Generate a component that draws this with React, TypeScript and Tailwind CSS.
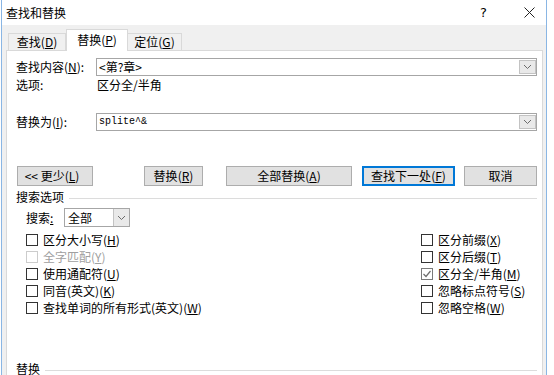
import React from "react";

function K({ c }: { c: string }) {
  return (
    <>
      (<span className="underline underline-offset-[1px]">{c}</span>)
    </>
  );
}

function Chevron() {
  return (
    <svg width="9" height="6" viewBox="0 0 9 6">
      <path d="M1 1 L4.5 4.5 L8 1" fill="none" stroke="#6b6b6b" strokeWidth="1" />
    </svg>
  );
}

function Combo({ children }: { children: React.ReactNode }) {
  return (
    <div className="flex-1 h-[18px] border border-[#a6a6a6] bg-white flex items-center">
      <div className="flex-1 pl-[2px] flex items-center">{children}</div>
      <div className="w-[17px] h-[14px] mr-[0px] border border-[#c3c3c3] bg-[#e9e9e9] flex items-center justify-center">
        <Chevron />
      </div>
    </div>
  );
}

function Btn({ children, w, def }: { children: React.ReactNode; w: string; def?: boolean }) {
  return (
    <div
      className={
        "h-[20px] flex items-center justify-center bg-[#e1e1e1] border " +
        w +
        (def ? " border-[#0078d7] shadow-[inset_0_0_0_1px_#0078d7]" : " border-[#adadad]")
      }
    >
      {children}
    </div>
  );
}

function Box({ checked, disabled }: { checked?: boolean; disabled?: boolean }) {
  return (
    <div
      className={
        "w-[12px] h-[12px] border bg-white flex items-center justify-center shrink-0 " +
        (disabled ? "border-[#cccccc]" : checked ? "border-[#7a7a7a]" : "border-[#333333]")
      }
    >
      {checked && (
        <svg width="10" height="10" viewBox="0 0 10 10">
          <path d="M1.5 5 L4 7.5 L8.5 2" fill="none" stroke="#6e6e6e" strokeWidth="1.2" />
        </svg>
      )}
    </div>
  );
}

function Check({ label, checked, disabled }: { label: React.ReactNode; checked?: boolean; disabled?: boolean }) {
  return (
    <div className="h-[17px] flex items-center gap-[5px]">
      <Box checked={checked} disabled={disabled} />
      <span className={disabled ? "text-[#a0a0a0]" : ""}>{label}</span>
    </div>
  );
}

export default function App() {
  return (
    <div className="w-[554px] h-[375px] bg-white overflow-hidden font-['Noto_Sans_CJK_SC',sans-serif] text-[12px] text-black leading-none">
      <div className="ml-[1px] w-[546px] h-[375px] border-x border-[#8ab6e4] bg-[#f0f0f0] flex flex-col">
        {/* title bar */}
        <div className="h-[25px] shrink-0 bg-white flex items-center pl-[4px]">
          <span>查找和替换</span>
          <span className="ml-auto text-[13px] font-['DejaVu_Sans',sans-serif]">?</span>
          <svg className="ml-[37px] mr-[11px]" width="11" height="11" viewBox="0 0 11 11">
            <path d="M0.5 0.5 L10.5 10.5 M10.5 0.5 L0.5 10.5" stroke="#222" strokeWidth="1" />
          </svg>
        </div>
        {/* tabs + panel */}
        <div className="ml-[4px] w-[537px] flex flex-col flex-1">
          <div className="h-[25px] shrink-0 flex items-end pl-[2px]">
            <div className="w-[58px] h-[17px] mb-[0px] border border-b-0 border-[#d9d9d9] flex items-center justify-center">
              查找<K c="D" />
            </div>
            <div className="relative z-10 -mb-[1px] w-[62px] h-[22px] border border-b-0 border-[#d9d9d9] bg-white flex items-center justify-center pb-[2px]">
              替换<K c="P" />
            </div>
            <div className="w-[54px] h-[17px] border border-b-0 border-l-0 border-[#d9d9d9] flex items-center justify-center">
              定位<K c="G" />
            </div>
          </div>
          <div className="flex-1 border border-[#d9d9d9] bg-white pl-[9px] pr-[5px] pt-[7px] flex flex-col">
            {/* row 1 */}
            <div className="h-[18px] flex items-center">
              <div className="w-[80px]">
                查找内容<K c="N" />:
              </div>
              <Combo>&lt;第?章&gt;</Combo>
            </div>
            <div className="h-[18px] flex items-center">
              <div className="w-[81px]">选项:</div>
              <div>区分全/半角</div>
            </div>
            <div className="mt-[19px] h-[18px] flex items-center">
              <div className="w-[80px]">
                替换为<K c="I" />:
              </div>
              <Combo>
                <span className="font-['Liberation_Mono',monospace] text-[10px]">splite^&amp;</span>
              </Combo>
            </div>
            {/* buttons */}
            <div className="mt-[35px] flex items-center">
              <div className="ml-[1px]">
                <Btn w="w-[76px]">
                  <span className="pr-[6px]">
                    &lt;&lt; 更少<K c="L" />
                  </span>
                </Btn>
              </div>
              <div className="ml-[51px]">
                <Btn w="w-[59px]">
                  替换<K c="R" />
                </Btn>
              </div>
              <div className="ml-[23px]">
                <Btn w="w-[126px]">
                  全部替换<K c="A" />
                </Btn>
              </div>
              <div className="ml-[10px]">
                <Btn w="w-[93px]" def>
                  查找下一处<K c="F" />
                </Btn>
              </div>
              <div className="ml-[9px]">
                <Btn w="w-[73px]">取消</Btn>
              </div>
            </div>
            {/* group header */}
            <div className="h-[21px] flex items-center">
              <span>搜索选项</span>
              <div className="flex-1 ml-[5px] h-px bg-[#dcdcdc] mt-[3px]" />
            </div>
            {/* search select */}
            <div className="mt-[1px] h-[19px] flex items-center pl-[10px]">
              <span className="w-[38px]">
                搜索<span className="underline">:</span>
              </span>
              <div className="w-[66px] h-[19px] border border-[#a6a6a6] flex items-center">
                <span className="flex-1 pl-[3px]">全部</span>
                <div className="w-[16px] h-[17px] bg-[#e9e9e9] border-l border-[#c3c3c3] flex items-center justify-center">
                  <Chevron />
                </div>
              </div>
            </div>
            {/* checkboxes */}
            <div className="mt-[4px] flex pl-[10px]">
              <div className="w-[395px] flex flex-col">
                <Check label={<>区分大小写<K c="H" /></>} />
                <Check label={<>全字匹配<K c="Y" /></>} disabled />
                <Check label={<>使用通配符<K c="U" /></>} />
                <Check label={<>同音(英文)<K c="K" /></>} />
                <Check label={<>查找单词的所有形式(英文)<K c="W" /></>} />
              </div>
              <div className="flex flex-col">
                <Check label={<>区分前缀<K c="X" /></>} />
                <Check label={<>区分后缀<K c="T" /></>} />
                <Check label={<>区分全/半角<K c="M" /></>} checked />
                <Check label={<>忽略标点符号<K c="S" /></>} />
                <Check label={<>忽略空格<K c="W" /></>} />
              </div>
            </div>
            {/* replace header */}
            <div className="mt-[45px] h-[16px] flex items-center">
              <span>替换</span>
              <div className="flex-1 ml-[5px] h-px bg-[#dcdcdc] mt-[2px]" />
            </div>
          </div>
        </div>
      </div>
    </div>
  );
}
